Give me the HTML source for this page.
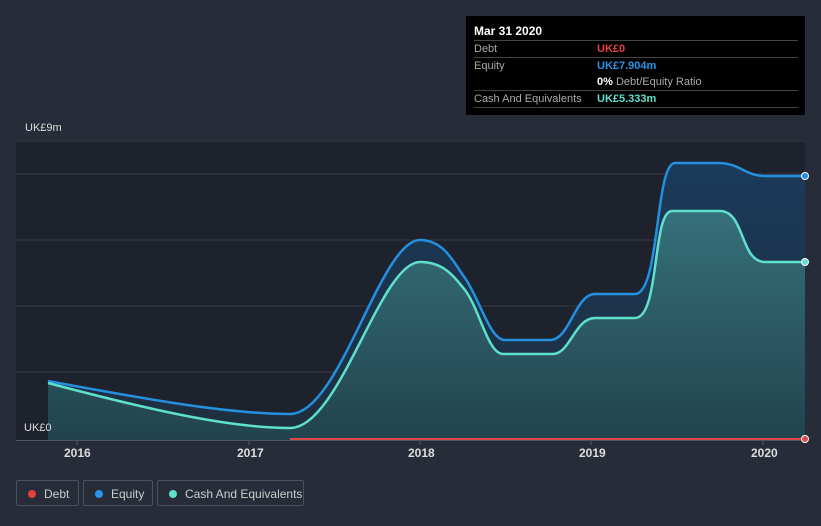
<!DOCTYPE html>
<html><head><style>
body{margin:0;width:821px;height:526px;background:#262c38;font-family:"Liberation Sans",sans-serif;overflow:hidden;position:relative}
.tt{position:absolute;left:466px;top:16px;width:339px;height:99px;background:#000;color:#fff;font-size:11px}
.tt .h{position:absolute;left:8px;top:8px;font-weight:bold;font-size:12px}
.row{position:absolute;left:8px;width:324px;border-top:1px solid #444;height:16px;line-height:16px}
.row .l{color:#aaa;position:absolute;left:0}
.row .v{position:absolute;left:123px;font-weight:bold}
.lg{position:absolute;top:480px;height:26px;border:1px solid #4a505c;border-radius:2px;color:#ccc;font-size:12px;line-height:26px;box-sizing:border-box}
.lg i{position:absolute;left:11px;top:9px;width:8px;height:8px;border-radius:50%}
.lg span{position:absolute;left:27px}
.yr{position:absolute;top:446px;color:#ddd;font-size:12px;font-weight:bold}
</style></head><body>
<svg width="821" height="526" style="position:absolute;left:0;top:0">
<rect x="16" y="140" width="789" height="300" fill="#1e222c"/>
<g stroke="#343a46" stroke-width="1">
<line x1="16" y1="141" x2="805" y2="141"/><line x1="16" y1="174" x2="805" y2="174"/><line x1="16" y1="240" x2="805" y2="240"/><line x1="16" y1="306" x2="805" y2="306"/><line x1="16" y1="372" x2="805" y2="372"/>
</g>
<defs><linearGradient id="g1" x1="0" y1="0" x2="0" y2="1"><stop offset="0" stop-color="#1b3a5a"/><stop offset="1" stop-color="#1e2e3e"/></linearGradient>
<linearGradient id="g2" x1="0" y1="0" x2="0" y2="1"><stop offset="0" stop-color="#35707a"/><stop offset="1" stop-color="#22434e"/></linearGradient></defs>
<path d="M48,381 C150,400 230,414 290,414 C340,414 380,240 420,240 C445,240 455,265 465,278 C480,300 490,340 505,340 L550,340 C570,340 575,294 595,294 L635,294 C660,294 655,163 675,163 L718,163 C740,163 745,176 765,176 L805,176 L805,440 L48,440Z" fill="url(#g1)"/>
<path d="M48,383 C150,410 230,428 290,428 C340,428 380,262 420,262 C445,262 455,278 465,290 C480,310 488,354 503,354 L553,354 C570,354 575,318 595,318 L635,318 C660,318 652,211 672,211 L720,211 C745,211 740,262 765,262 L805,262 L805,440 L48,440Z" fill="url(#g2)"/>
<path d="M48,381 C150,400 230,414 290,414 C340,414 380,240 420,240 C445,240 455,265 465,278 C480,300 490,340 505,340 L550,340 C570,340 575,294 595,294 L635,294 C660,294 655,163 675,163 L718,163 C740,163 745,176 765,176 L805,176" fill="none" stroke="#2390e0" stroke-width="2.5"/>
<path d="M48,383 C150,410 230,428 290,428 C340,428 380,262 420,262 C445,262 455,278 465,290 C480,310 488,354 503,354 L553,354 C570,354 575,318 595,318 L635,318 C660,318 652,211 672,211 L720,211 C745,211 740,262 765,262 L805,262" fill="none" stroke="#5ee0cc" stroke-width="2.5"/>
<line x1="290" y1="439" x2="805" y2="439" stroke="#e04848" stroke-width="2"/>
<line x1="16" y1="440.5" x2="805" y2="440.5" stroke="#50566a"/>
<g stroke="#50566a"><line x1="77" y1="440" x2="77" y2="445"/><line x1="249" y1="440" x2="249" y2="445"/><line x1="420" y1="440" x2="420" y2="445"/><line x1="591" y1="440" x2="591" y2="445"/><line x1="763" y1="440" x2="763" y2="445"/></g>
<circle cx="805" cy="176" r="3.5" fill="#2390e0" stroke="#fff"/>
<circle cx="805" cy="262" r="3.5" fill="#5ee0cc" stroke="#fff"/>
<circle cx="805" cy="439" r="3.5" fill="#e04848" stroke="#fff"/>
</svg>
<div style="position:absolute;left:25px;top:122px;color:#ddd;font-size:11px">UK£9m</div>
<div style="position:absolute;left:24px;top:422px;color:#ddd;font-size:11px">UK£0</div>
<div class="yr" style="left:64px">2016</div><div class="yr" style="left:237px">2017</div><div class="yr" style="left:408px">2018</div><div class="yr" style="left:579px">2019</div><div class="yr" style="left:751px">2020</div>
<div class="tt"><div class="h">Mar 31 2020</div>
<div class="row" style="top:24px"><span class="l">Debt</span><span class="v" style="color:#e84040">UK£0</span></div>
<div class="row" style="top:41px"><span class="l">Equity</span><span class="v" style="color:#2a94e8">UK£7.904m</span></div>
<div style="position:absolute;left:131px;top:58px;line-height:16px"><b>0%</b> <span style="color:#aaa">Debt/Equity Ratio</span></div>
<div class="row" style="top:74px"><span class="l">Cash And Equivalents</span><span class="v" style="color:#5ee0cc">UK£5.333m</span></div>
<div class="row" style="top:91px;height:0"></div>
</div>
<div class="lg" style="left:16px;width:63px"><i style="background:#e84040"></i><span>Debt</span></div>
<div class="lg" style="left:83px;width:70px"><i style="background:#2a94e8"></i><span>Equity</span></div>
<div class="lg" style="left:157px;width:147px"><i style="background:#5ee0cc"></i><span>Cash And Equivalents</span></div>
</body></html>
